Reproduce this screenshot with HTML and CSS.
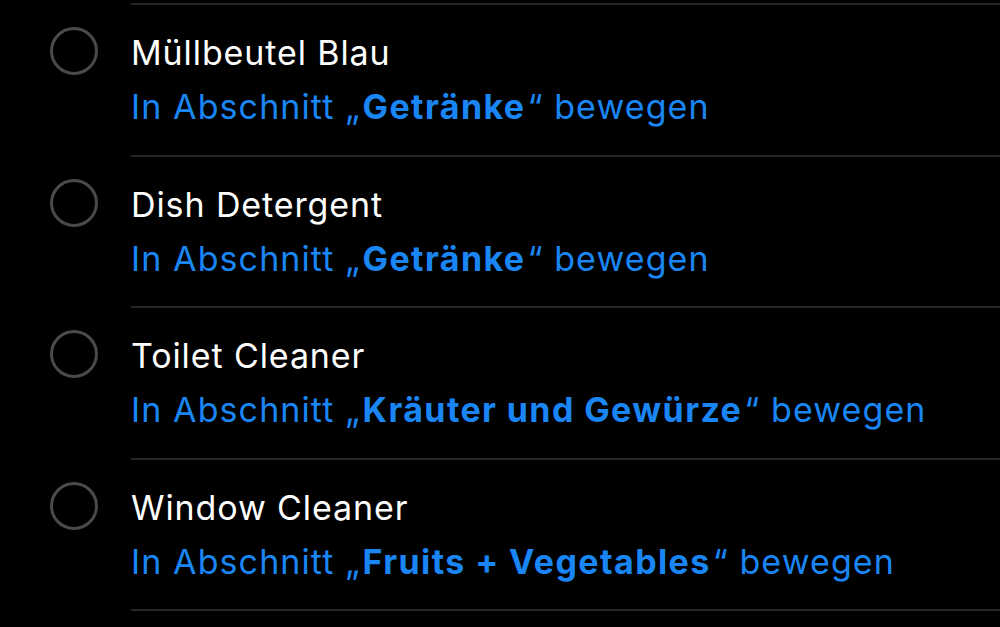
FILE: index.html
```html
<!DOCTYPE html>
<html lang="de">
<head>
    <meta charset="UTF-8">
    <title>Liste</title>
    <link rel="stylesheet" href="styles.css">
</head>
<body>
    <div class="list">
        <div class="item">
            <div class="check"></div>
            <div class="body">
                <div class="title">Müllbeutel Blau</div>
                <div class="move">In Abschnitt „<b>Getränke</b>“ bewegen</div>
            </div>
        </div>
        <div class="item">
            <div class="check"></div>
            <div class="body">
                <div class="title">Dish Detergent</div>
                <div class="move">In Abschnitt „<b>Getränke</b>“ bewegen</div>
            </div>
        </div>
        <div class="item">
            <div class="check"></div>
            <div class="body">
                <div class="title">Toilet Cleaner</div>
                <div class="move">In Abschnitt „<b>Kräuter und Gewürze</b>“ bewegen</div>
            </div>
        </div>
        <div class="item">
            <div class="check"></div>
            <div class="body">
                <div class="title">Window Cleaner</div>
                <div class="move">In Abschnitt „<b>Fruits + Vegetables</b>“ bewegen</div>
            </div>
        </div>
    </div>
</body>
</html>
```

FILE: styles.css
```css
body {
    margin: 0;
    background-color: #000;
    font-family: Inter, 'Noto Sans', sans-serif;
    color: #fff;
    overflow: hidden;
}
.list {
    padding-top: 3px;
}
.item {
    display: flex;
    height: 151.5px;
}
.check {
    flex: none;
    width: 42px;
    height: 42px;
    margin: 24px 33px 0 50px;
    border: 3px solid #4a4a4c;
    border-radius: 50%;
}
.body {
    flex: 1;
    border-top: 2px solid #262628;
    padding-top: 21px;
}
.title {
    font-size: 34px;
    line-height: 54px;
    letter-spacing: 0.9px;
}
.move {
    font-size: 34px;
    line-height: 54px;
    color: #1a86f5;
    letter-spacing: 1.1px;
}
.move b {
    font-weight: 700;
    letter-spacing: 1.4px;
    margin: 0 2px;
}
.list::after {
    content: '';
    display: block;
    margin-left: 131px;
    border-top: 2px solid #262628;
}
```
